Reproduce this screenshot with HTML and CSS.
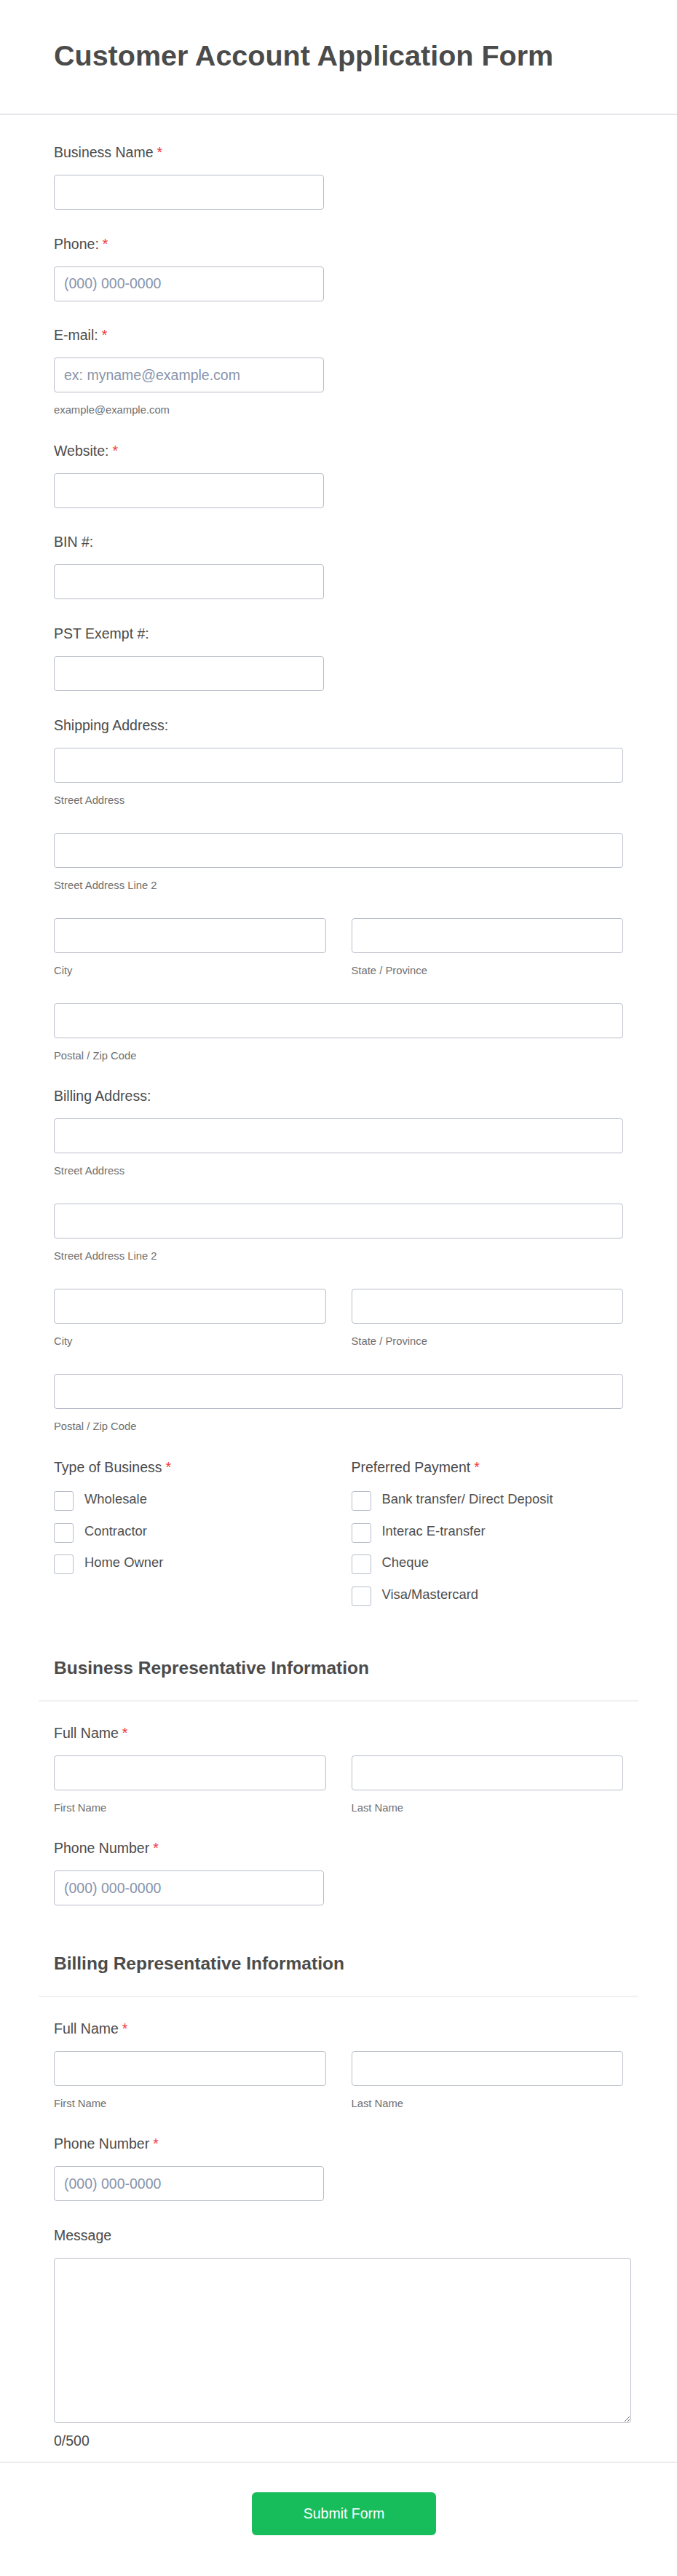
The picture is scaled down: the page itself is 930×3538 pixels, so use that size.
FILE: index.html
```html
<!DOCTYPE html>
<html lang="en">
<head>
    <meta charset="UTF-8">
    <meta name="viewport" content="width=device-width, initial-scale=1.0">
    <title>Customer Account Application Form</title>
    <link rel="stylesheet" href="styles.css">
</head>
<body>

    <div class="form-header">
        <h1>Customer Account Application Form</h1>
    </div>

    <form class="form-body">
        <div class="field">
            <label class="field-label">Business Name<span class="req">*</span></label>
            <input class="input short" type="text">
        </div>

        <div class="field">
            <label class="field-label">Phone:<span class="req">*</span></label>
            <input class="input short" type="text" placeholder="(000) 000-0000">
        </div>

        <div class="field">
            <label class="field-label">E-mail:<span class="req">*</span></label>
            <input class="input short" type="text" placeholder="ex: myname@example.com">
            <span class="sub">example@example.com</span>
        </div>

        <div class="field">
            <label class="field-label">Website:<span class="req">*</span></label>
            <input class="input short" type="text">
        </div>

        <div class="field">
            <label class="field-label">BIN #:</label>
            <input class="input short" type="text">
        </div>

        <div class="field">
            <label class="field-label">PST Exempt #:</label>
            <input class="input short" type="text">
        </div>

        <!-- Shipping -->
        <div class="field">
            <label class="field-label">Shipping Address:</label>
            <div class="address">
                <div class="part wide"><input class="input" type="text"><span class="sub">Street Address</span></div>
                <div class="part wide"><input class="input" type="text"><span class="sub">Street Address Line 2</span></div>
                <div class="part"><input class="input" type="text"><span class="sub">City</span></div>
                <div class="part"><input class="input" type="text"><span class="sub">State / Province</span></div>
                <div class="part wide"><input class="input" type="text"><span class="sub">Postal / Zip Code</span></div>
            </div>
        </div>

        <!-- Billing -->
        <div class="field">
            <label class="field-label">Billing Address:</label>
            <div class="address">
                <div class="part wide"><input class="input" type="text"><span class="sub">Street Address</span></div>
                <div class="part wide"><input class="input" type="text"><span class="sub">Street Address Line 2</span></div>
                <div class="part"><input class="input" type="text"><span class="sub">City</span></div>
                <div class="part"><input class="input" type="text"><span class="sub">State / Province</span></div>
                <div class="part wide"><input class="input" type="text"><span class="sub">Postal / Zip Code</span></div>
            </div>
        </div>

        <div class="field-pair">
            <div class="field">
                <label class="field-label">Type of Business<span class="req">*</span></label>
                <div class="options">
                    <label class="option"><input type="checkbox"><span>Wholesale</span></label>
                    <label class="option"><input type="checkbox"><span>Contractor</span></label>
                    <label class="option"><input type="checkbox"><span>Home Owner</span></label>
                </div>
            </div>
            <div class="field">
                <label class="field-label">Preferred Payment<span class="req">*</span></label>
                <div class="options">
                    <label class="option"><input type="checkbox"><span>Bank transfer/ Direct Deposit</span></label>
                    <label class="option"><input type="checkbox"><span>Interac E-transfer</span></label>
                    <label class="option"><input type="checkbox"><span>Cheque</span></label>
                    <label class="option"><input type="checkbox"><span>Visa/Mastercard</span></label>
                </div>
            </div>
        </div>

        <!-- Business rep -->
        <div class="section-head">
            <h2>Business Representative Information</h2>
        </div>

        <div class="field">
            <label class="field-label">Full Name<span class="req">*</span></label>
            <div class="address">
                <div class="part"><input class="input" type="text"><span class="sub">First Name</span></div>
                <div class="part"><input class="input" type="text"><span class="sub">Last Name</span></div>
            </div>
        </div>

        <div class="field">
            <label class="field-label">Phone Number<span class="req">*</span></label>
            <input class="input short" type="text" placeholder="(000) 000-0000">
        </div>

        <!-- Billing rep -->
        <div class="section-head">
            <h2>Billing Representative Information</h2>
        </div>

        <div class="field">
            <label class="field-label">Full Name<span class="req">*</span></label>
            <div class="address">
                <div class="part"><input class="input" type="text"><span class="sub">First Name</span></div>
                <div class="part"><input class="input" type="text"><span class="sub">Last Name</span></div>
            </div>
        </div>

        <div class="field">
            <label class="field-label">Phone Number<span class="req">*</span></label>
            <input class="input short" type="text" placeholder="(000) 000-0000">
        </div>

        <div class="field">
            <label class="field-label">Message</label>
            <textarea class="message"></textarea>
            <div class="counter">0/500</div>
        </div>
    </form>

    <div class="form-footer">
        <button class="btn-submit" type="button">Submit Form</button>
    </div>

</body>
</html>
```

FILE: styles.css
```css
/* Basic Styles */
body {
    margin: 0;
    background-color: #fff;
    font-family: "Liberation Sans", Arial, sans-serif;
    color: #4b4b4b;
}

/* Header */
.form-header {
    padding: 53px 74px 56px;
    border-bottom: 2px solid #e6e7eb;
}

.form-header h1 {
    margin: 0;
    font-size: 39.5px;
    line-height: 47px;
    font-weight: 700;
    color: #4b4b4b;
}

/* Form body */
.form-body {
    padding: 22px 74px 0;
}

.field {
    padding: 17px 0 17.6px;
}

.field-label {
    display: block;
    font-size: 19.5px;
    line-height: 24px;
    margin-bottom: 19px;
    color: #4b4b4b;
}

.req {
    color: #f23a3c;
    margin-left: 5px;
}

.input {
    display: block;
    width: 100%;
    height: 48px;
    box-sizing: border-box;
    margin: 0;
    padding: 0 13px;
    border: 1px solid #b8bdc9;
    border-radius: 4px;
    background: #fff;
    font-family: inherit;
    font-size: 19.5px;
    color: #2c3345;
}

.input.short {
    width: 371px;
}

.input::placeholder {
    color: #8894ab;
}

.sub {
    display: block;
    margin-top: 15px;
    font-size: 14.8px;
    line-height: 18px;
    color: #6f6f6f;
}

/* Address / name grids */
.address {
    display: grid;
    grid-template-columns: 1fr 1fr;
    column-gap: 35px;
    row-gap: 36px;
}

.address .wide {
    grid-column: 1 / 3;
}

/* Checkboxes */
.field-pair {
    display: grid;
    grid-template-columns: 1fr 1fr;
    column-gap: 35px;
    margin-bottom: 5px;
}

.field-pair .field-label {
    margin-bottom: 21.4px;
}

.options {
    display: flex;
    flex-direction: column;
    gap: 16.6px;
}

.option {
    display: flex;
    align-items: flex-start;
    gap: 15px;
    font-size: 18.4px;
    line-height: 21px;
    color: #4f4f4f;
}

.option input {
    appearance: none;
    -webkit-appearance: none;
    flex: none;
    width: 27px;
    height: 27px;
    margin: 0;
    border: 1px solid #b8bdc9;
    border-radius: 3px;
    background: #fff;
}

/* Section headers */
.section-head {
    margin: 0 -21px 14px;
    padding: 47px 21px 30px;
    border-bottom: 2px solid #f1f1f4;
}

.section-head h2 {
    margin: 0;
    font-size: 24.5px;
    line-height: 29px;
    font-weight: 700;
    color: #4b4b4b;
}

/* Message */
.message {
    display: block;
    width: 793px;
    height: 227px;
    box-sizing: border-box;
    margin: 0;
    border: 1px solid #b8bdc9;
    border-radius: 4px;
    font-family: inherit;
    font-size: 19.5px;
}

.counter {
    margin-top: 12px;
    font-size: 19.5px;
    line-height: 24px;
    color: #4b4b4b;
}

/* Footer */
.form-footer {
    border-top: 2px solid #ebebef;
    padding: 40px 0 56px 15px;
    text-align: center;
}

.btn-submit {
    width: 253px;
    height: 59px;
    border: none;
    border-radius: 6px;
    background-color: #18bd5b;
    color: #fff;
    font-family: inherit;
    font-size: 19.5px;
    cursor: pointer;
}
```
